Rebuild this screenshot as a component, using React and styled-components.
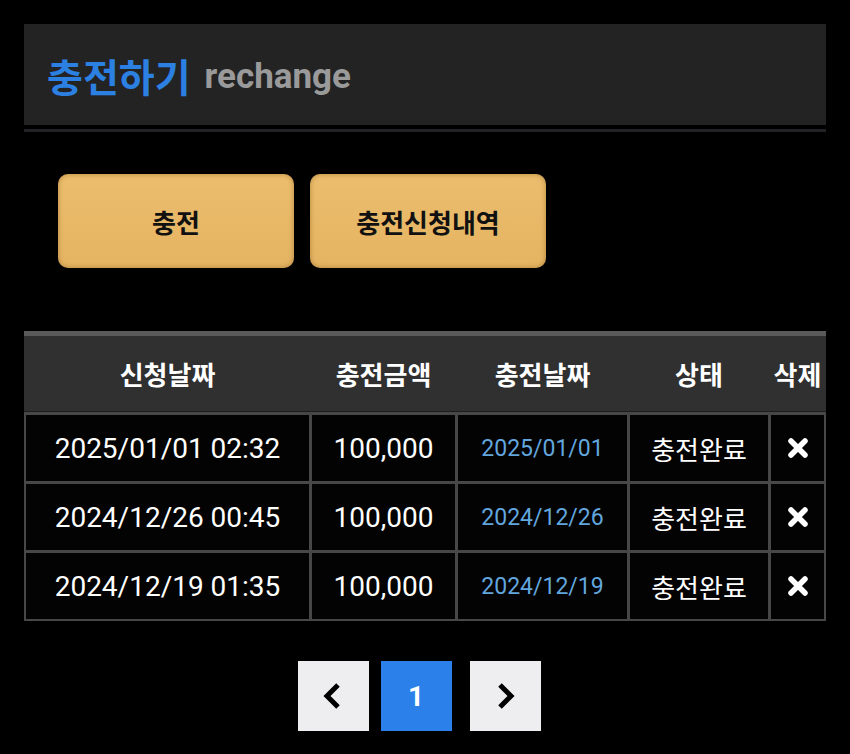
import React from "react";
import styled, { createGlobalStyle } from "styled-components";

const GlobalStyle = createGlobalStyle`
  html, body {
    margin: 0;
    padding: 0;
    background: #000;
  }
  body {
    font-family: Roboto, "Noto Sans CJK KR", sans-serif;
    color: #fff;
  }
`;

const COLS = "283px 143px 169px 138px 53px";

const rows = [
  { req: "2025/01/01 02:32", amount: "100,000", date: "2025/01/01", status: "충전완료" },
  { req: "2024/12/26 00:45", amount: "100,000", date: "2024/12/26", status: "충전완료" },
  { req: "2024/12/19 01:35", amount: "100,000", date: "2024/12/19", status: "충전완료" },
];

const App = () => {
  return (
    <Page>
      <GlobalStyle />
      <TitleBar>
        <TitleKo>충전하기</TitleKo>
        <TitleEn>rechange</TitleEn>
      </TitleBar>
      <Divider />

      <ButtonRow>
        <GoldButton>충전</GoldButton>
        <GoldButton>충전신청내역</GoldButton>
      </ButtonRow>

      <Table>
        <HeadRow>
          <HeadCell>신청날짜</HeadCell>
          <HeadCell>충전금액</HeadCell>
          <HeadCell>충전날짜</HeadCell>
          <HeadCell>상태</HeadCell>
          <HeadCell>삭제</HeadCell>
        </HeadRow>
        <Body>
          {rows.map((r, i) => (
            <React.Fragment key={i}>
              <Cell>{r.req}</Cell>
              <Cell>{r.amount}</Cell>
              <Cell $tone="date">{r.date}</Cell>
              <Cell $tone="ko">{r.status}</Cell>
              <Cell>
                <DeleteIcon />
              </Cell>
            </React.Fragment>
          ))}
        </Body>
      </Table>

      <Pager>
        <PageBtn>
          <Chevron dir="left" />
        </PageBtn>
        <PageBtn $active>1</PageBtn>
        <PageBtn>
          <Chevron dir="right" />
        </PageBtn>
      </Pager>
    </Page>
  );
};

const DeleteIcon = () => (
  <svg width="22" height="22" viewBox="0 0 22 22">
    <path
      d="M4 4 L18 18 M18 4 L4 18"
      stroke="#fff"
      strokeWidth="5.5"
      strokeLinecap="round"
      fill="none"
    />
  </svg>
);

const Chevron = ({ dir }) => (
  <svg width="22" height="28" viewBox="0 0 22 28">
    <polyline
      points={dir === "left" ? "16,3 5,14 16,25" : "6,3 17,14 6,25"}
      stroke="#000"
      strokeWidth="5"
      strokeLinecap="butt"
      strokeLinejoin="miter"
      fill="none"
    />
  </svg>
);

export default App;

const Page = styled.div`
  padding: 24px 24px 22px;
`;

const TitleBar = styled.div`
  height: 101px;
  background: #232323;
  display: flex;
  align-items: center;
  padding-left: 23px;
  gap: 14px;
  font-weight: 700;
`;

const TitleKo = styled.span`
  color: #2b80e2;
  font-size: 39px;
  font-family: "Noto Sans CJK KR", sans-serif;
  font-weight: 700;
`;

const TitleEn = styled.span`
  color: #9a9a9a;
  font-size: 35px;
  font-family: Roboto, sans-serif;
  font-weight: 700;
  padding-top: 3px;
`;

const Divider = styled.div`
  height: 3px;
  margin-top: 4px;
  background: #222226;
`;

const ButtonRow = styled.div`
  display: flex;
  gap: 16px;
  margin-top: 42px;
  padding-left: 34px;
`;

const GoldButton = styled.div`
  width: 236px;
  height: 94px;
  border-radius: 10px;
  background: linear-gradient(#ebbd6c, #e5b463);
  box-shadow: inset 0 0 5px rgba(120, 80, 20, 0.5), 0 2px 3px rgba(0, 0, 0, 0.6);
  display: flex;
  align-items: center;
  justify-content: center;
  color: #111;
  font-family: "Noto Sans CJK KR", sans-serif;
  font-weight: 700;
  font-size: 26px;
`;

const Table = styled.div`
  margin-top: 63px;
`;

const HeadRow = styled.div`
  display: grid;
  grid-template-columns: ${COLS};
  column-gap: 3px;
  padding: 0 2px;
  height: 75px;
  background: #303030;
  border-top: 5px solid #5a5a5a;
`;

const HeadCell = styled.div`
  display: flex;
  align-items: center;
  justify-content: center;
  font-family: "Noto Sans CJK KR", sans-serif;
  font-weight: 700;
  font-size: 26px;
  color: #fff;
`;

const Body = styled.div`
  display: grid;
  grid-template-columns: ${COLS};
  grid-auto-rows: 66px;
  gap: 3px;
  padding: 3px 2px 2px;
  background: #474747;
  border-top: 1px solid #1c1c1c;
`;

const Cell = styled.div`
  background: #030303;
  display: flex;
  align-items: center;
  justify-content: center;
  color: ${(p) => (p.$tone === "date" ? "#62a6de" : "#fff")};
  font-size: ${(p) => (p.$tone === "date" ? "23px" : p.$tone === "ko" ? "26px" : "28px")};
  font-family: ${(p) =>
    p.$tone === "ko" ? `"Noto Sans CJK KR", sans-serif` : `Roboto, "Noto Sans CJK KR", sans-serif`};
`;

const Pager = styled.div`
  display: flex;
  justify-content: center;
  gap: 12px;
  margin-top: 40px;
  padding-right: 12px;
`;

const PageBtn = styled.div`
  width: 71px;
  height: 70px;
  margin-right: ${(p) => (p.$active ? "6px" : "0")};
  display: flex;
  align-items: center;
  justify-content: center;
  background: ${(p) => (p.$active ? "#2b80ea" : "#eeeef0")};
  color: #fff;
  font-family: Roboto, sans-serif;
  font-weight: 700;
  font-size: 28px;
`;
